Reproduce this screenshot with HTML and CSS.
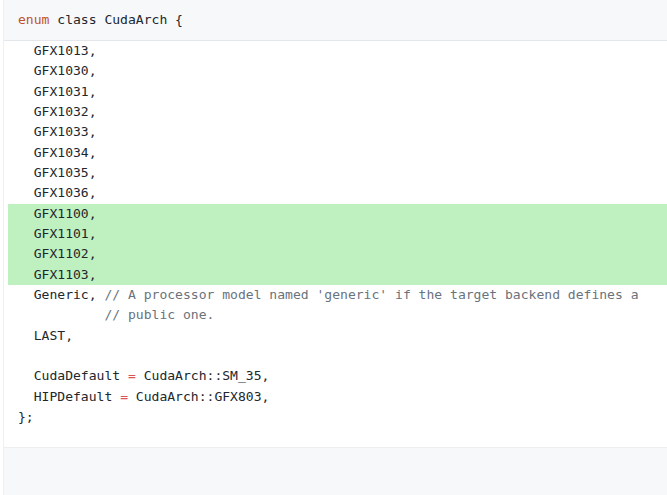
FILE: index.html
```html
<!DOCTYPE html>
<html>
<head>
<meta charset="utf-8">
<link rel="stylesheet" href="styles.css">
</head>
<body>
<div class="frame">
  <div class="head"><span class="line"><span class="kw">enum</span> class CudaArch {</span></div>
  <div class="code">
    <div class="line">  GFX1013,</div>
    <div class="line">  GFX1030,</div>
    <div class="line">  GFX1031,</div>
    <div class="line">  GFX1032,</div>
    <div class="line">  GFX1033,</div>
    <div class="line">  GFX1034,</div>
    <div class="line">  GFX1035,</div>
    <div class="line">  GFX1036,</div>
    <div class="line add">  GFX1100,</div>
    <div class="line add">  GFX1101,</div>
    <div class="line add">  GFX1102,</div>
    <div class="line add">  GFX1103,</div>
    <div class="line">  Generic, <span class="cm">// A processor model named 'generic' if the target backend defines a</span></div>
    <div class="line">           <span class="cm">// public one.</span></div>
    <div class="line">  LAST,</div>
    <div class="line"> </div>
    <div class="line">  CudaDefault <span class="op">=</span> CudaArch::SM_35,</div>
    <div class="line">  HIPDefault <span class="op">=</span> CudaArch::GFX803,</div>
    <div class="line">};</div>
  </div>
  <div class="foot"></div>
</div>
</body>
</html>
```
FILE: styles.css
```css
html, body {
  margin: 0;
  padding: 0;
  background: #ffffff;
}
.frame {
  width: 667px;
  height: 495px;
  display: flex;
  flex-direction: column;
  border-left: 1px solid #eef0f2;
  margin-left: 3px;
  box-sizing: border-box;
  font-family: "DejaVu Sans Mono", monospace;
  font-size: 13.05px;
  color: #22272d;
}
.head {
  height: 41px;
  background: #f6f8fa;
  border-bottom: 1px solid #e4e7ea;
  display: flex;
  align-items: center;
  padding-left: 14px;
  box-sizing: border-box;
}
.code {
  padding: 0 0 20px 4px;
  flex: none;
}
.line {
  white-space: pre;
  height: 20.33px;
  line-height: 20.33px;
  padding-left: 10px;
}
.head .line {
  padding-left: 0;
}
.add {
  background: #bff0bf;
}
.kw {
  color: #c0522f;
}
.cm {
  color: #6a737d;
}
.op {
  color: #d9535f;
}
.foot {
  flex: 1;
  background: #f6f8fa;
  border-top: 1px solid #eceef0;
}
```
